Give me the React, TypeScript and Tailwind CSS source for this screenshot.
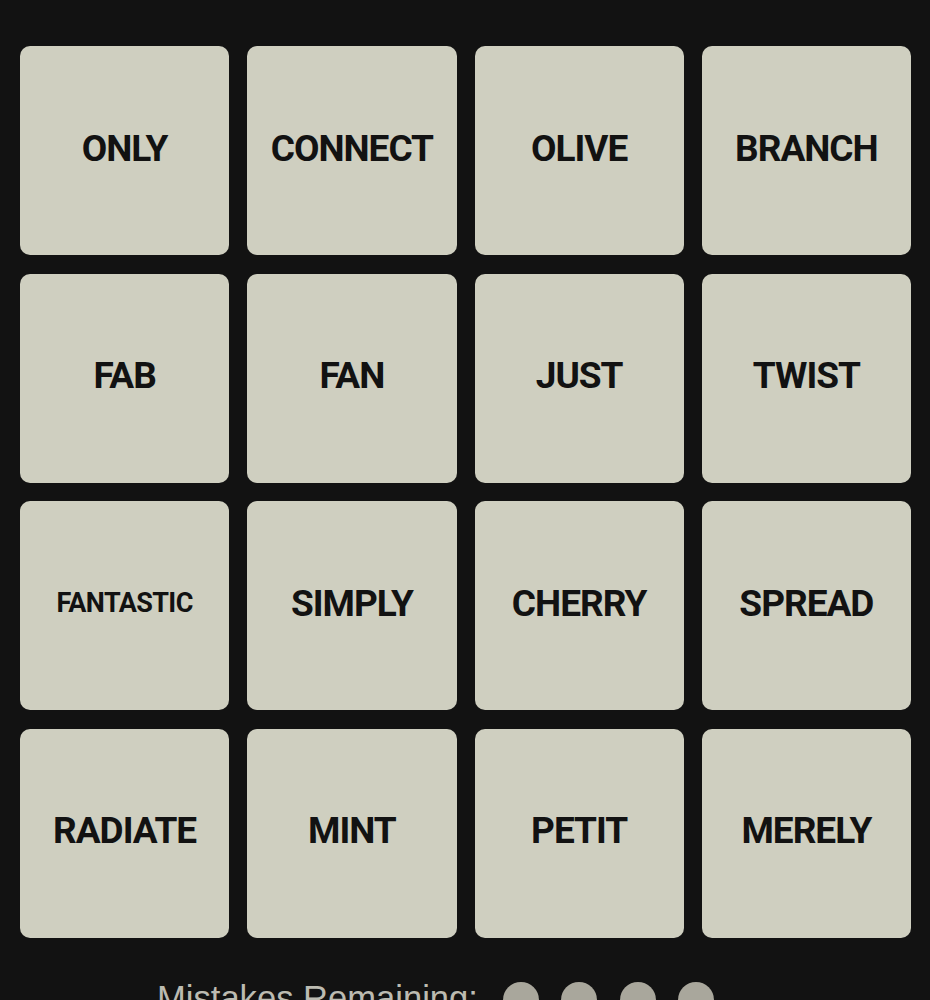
const words = [
  "ONLY", "CONNECT", "OLIVE", "BRANCH",
  "FAB", "FAN", "JUST", "TWIST",
  "FANTASTIC", "SIMPLY", "CHERRY", "SPREAD",
  "RADIATE", "MINT", "PETIT", "MERELY",
];

function Tile({ word }: { word: string }) {
  const small = word.length > 8;
  return (
    <div className="h-[209px] rounded-[10px] bg-[#cfcfc0] flex items-center justify-center pb-[4px] select-none">
      <span
        className={
          small
            ? "text-[27px] font-bold tracking-[-0.6px] text-[#121212]"
            : "text-[37px] font-bold tracking-[-1px] text-[#121212]"
        }
      >
        {word}
      </span>
    </div>
  );
}

export default function App() {
  return (
    <div
      className="h-[1000px] overflow-hidden bg-[#121212]"
      style={{ fontFamily: "Roboto, 'Liberation Sans', sans-serif" }}
    >
      <div className="pt-[46px] pl-[20px] pr-[19px] grid grid-cols-4 gap-x-[18px] gap-y-[18.5px]">
        {words.map((w) => (
          <Tile key={w} word={w} />
        ))}
      </div>
      <div className="mt-[44px] pl-[157px] flex items-start">
        <span
          className="text-[34.6px] leading-none text-[#bcbbb1] mt-[-1px]"
          style={{ fontFamily: "'Liberation Sans', sans-serif" }}
        >
          Mistakes Remaining:
        </span>
        <div className="ml-[25px] flex gap-[22.5px]">
          <div className="w-[36px] h-[36px] rounded-full bg-[#a9a79c]" />
          <div className="w-[36px] h-[36px] rounded-full bg-[#a9a79c]" />
          <div className="w-[36px] h-[36px] rounded-full bg-[#a9a79c]" />
          <div className="w-[36px] h-[36px] rounded-full bg-[#a9a79c]" />
        </div>
      </div>
    </div>
  );
}
